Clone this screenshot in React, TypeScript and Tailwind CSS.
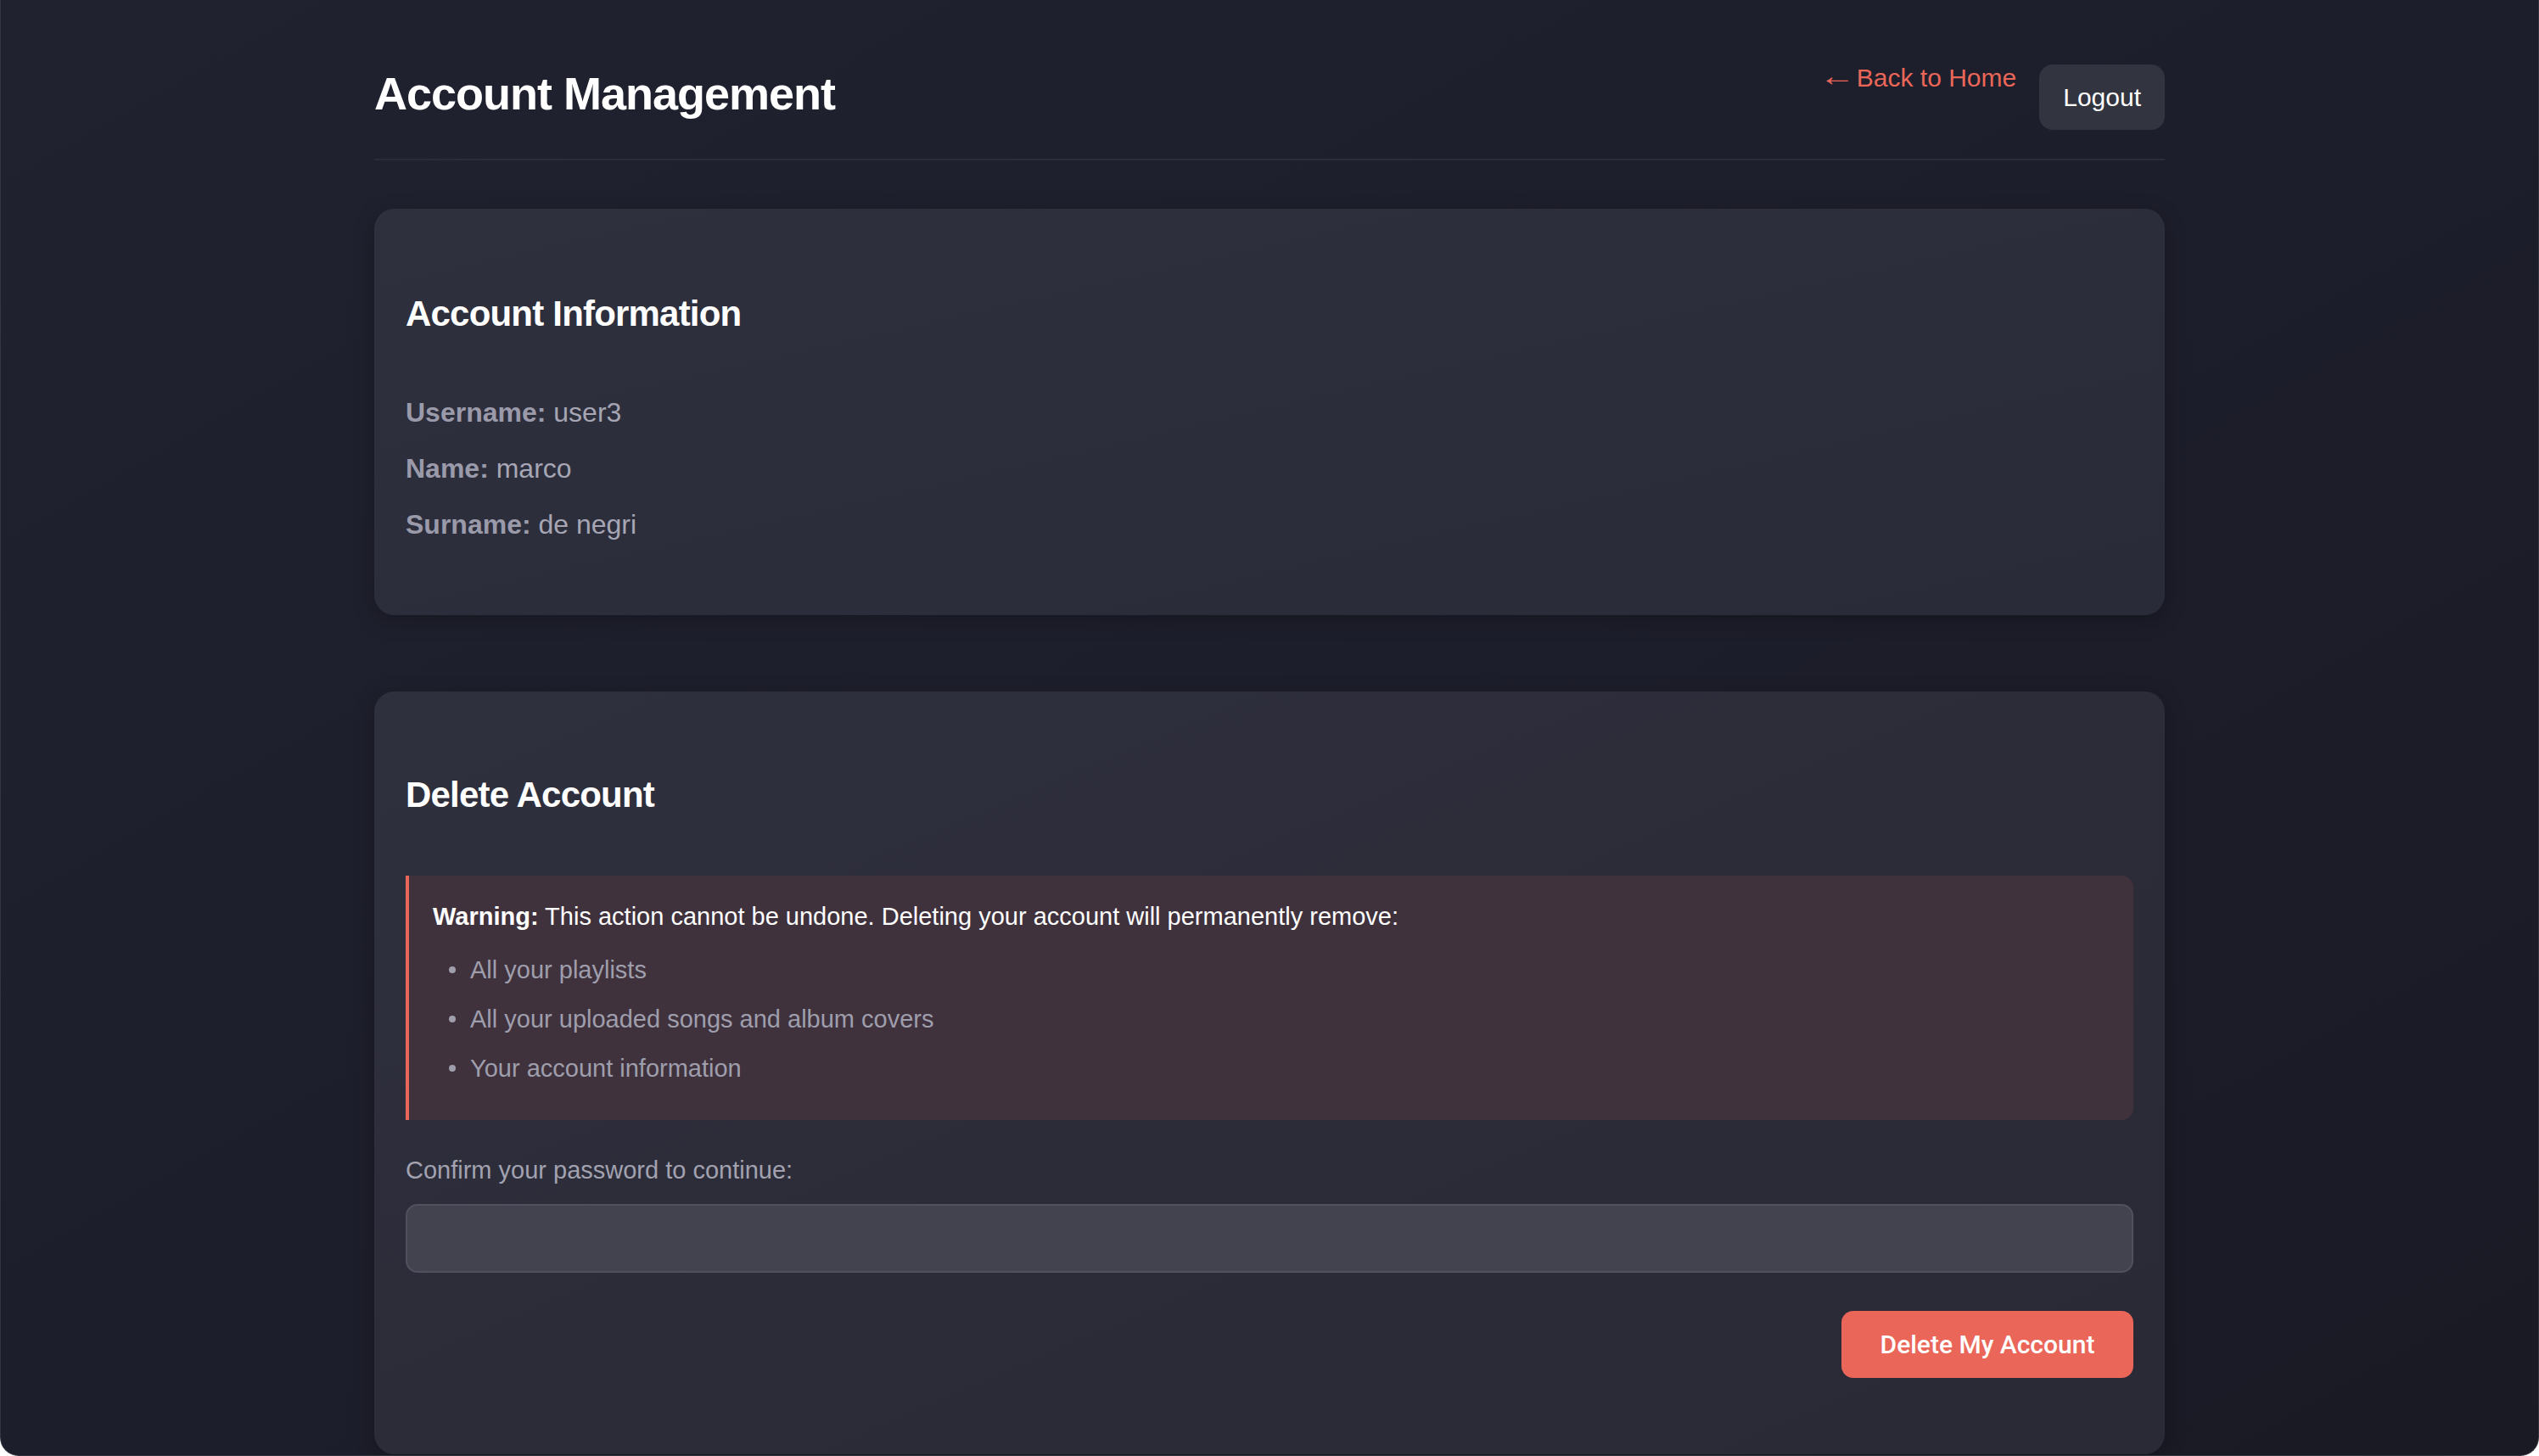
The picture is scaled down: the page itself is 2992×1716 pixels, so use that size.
import { useState } from 'react';

const removedItems = [
  'All your playlists',
  'All your uploaded songs and album covers',
  'Your account information',
];

const accountFields = [
  { label: 'Username:', value: 'user3' },
  { label: 'Name:', value: 'marco' },
  { label: 'Surname:', value: 'de negri' },
];

export default function App() {
  const [password, setPassword] = useState('');

  return (
    <div className="h-[1716px] overflow-hidden bg-gradient-to-br from-[#20222f] via-[#1d1e2b] to-[#191a24] border-x border-b border-[#33353f] rounded-b-[22px] font-['Liberation_Sans',Arial,sans-serif]">
      <div className="w-[2110px] mx-auto">
        {/* header */}
        <header className="flex items-start justify-between pt-[76px] pb-[34px] border-b-2 border-[#2a2c39]">
          <h1 className="mt-[2px] text-[54px] leading-[64px] font-bold tracking-[-1px] text-white">Account Management</h1>
          <div className="flex items-start gap-[27px]">
            <a href="#" className="flex items-center gap-[6px] text-[30px] leading-[32px] text-[#ea6658]">
              <span className="text-[34px] leading-[32px] scale-x-125 -translate-y-[3px]">←</span>
              <span>Back to Home</span>
            </a>
            <button className="h-[77px] px-[28px] rounded-[16px] bg-[#323440] text-[30px] text-white">
              Logout
            </button>
          </div>
        </header>

        {/* account info */}
        <section className="mt-[57px] rounded-[24px] bg-gradient-to-br from-[#2f303e] to-[#2a2b38] shadow-[0_6px_24px_rgba(0,0,0,0.25)] px-[37px] pt-[99px] pb-[83px]">
          <h2 className="text-[42px] leading-[50px] font-bold tracking-[-0.8px] text-white">Account Information</h2>
          <div className="mt-[67px] flex flex-col gap-[18px]">
            {accountFields.map((f) => (
              <p key={f.label} className="text-[32px] leading-[48px] text-[#a6a6b4]">
                <span className="font-bold text-[#9a9aaa]">{f.label}</span> {f.value}
              </p>
            ))}
          </div>
        </section>

        {/* delete account */}
        <section className="mt-[90px] rounded-[24px] bg-gradient-to-br from-[#2f303e] via-[#2c2c39] to-[#292a36] shadow-[0_6px_24px_rgba(0,0,0,0.25)] px-[37px] pt-[97px] pb-[90px]">
          <h2 className="text-[42px] leading-[50px] font-bold tracking-[-0.8px] text-white">Delete Account</h2>

          <div className="mt-[70px] bg-[#40323d] border-l-4 border-[#ea6658] rounded-r-[14px] pl-[28px] pr-[32px] pt-[28px] pb-[41px]">
            <p className="text-[29px] leading-[40px] text-white">
              <span className="font-bold">Warning:</span> This action cannot be undone. Deleting your account will permanently remove:
            </p>
            <ul className="mt-[23px] flex flex-col gap-[18px]">
              {removedItems.map((item) => (
                <li key={item} className="flex items-center text-[29px] leading-[40px] text-[#9e9eac]">
                  <span className="w-[8px] h-[8px] rounded-full bg-[#9e9eac] ml-[19px] mr-[17px]" />
                  {item}
                </li>
              ))}
            </ul>
          </div>

          <label className="block mt-[39px] text-[29px] leading-[40px] text-[#a2a2b0]">
            Confirm your password to continue:
          </label>
          <input
            type="password"
            value={password}
            onChange={(e) => setPassword(e.target.value)}
            className="mt-[20px] w-full h-[81px] rounded-[14px] bg-[#42434f] border-2 border-[#50515f] px-[24px] text-[30px] text-white outline-none"
          />

          <div className="mt-[45px] flex justify-end">
            <button className="h-[79px] w-[344px] rounded-[14px] bg-[#ea6658] text-[30px] font-medium text-white font-['Roboto',sans-serif]">
              Delete My Account
            </button>
          </div>
        </section>
      </div>
    </div>
  );
}
